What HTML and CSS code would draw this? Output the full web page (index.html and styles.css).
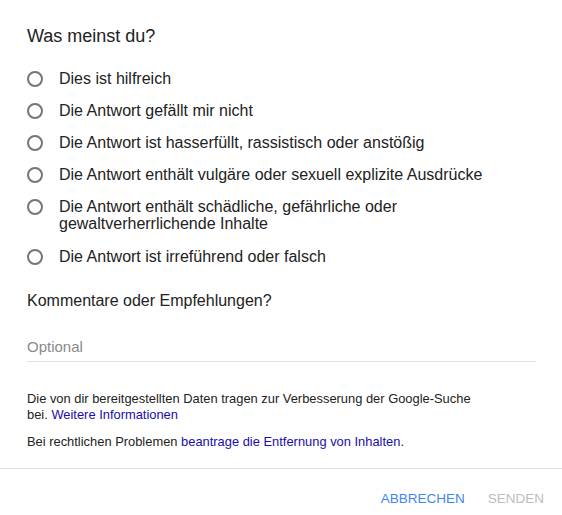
FILE: index.html
```html
<html>
<head>
<meta charset="utf-8">
<link rel="stylesheet" href="styles.css">
</head>
<body>

<div class="dialog">
  <div class="content">
    <div class="title">Was meinst du?</div>

    <div class="options">
      <label class="option"><span class="radio"></span><span class="label">Dies ist hilfreich</span></label>
      <label class="option"><span class="radio"></span><span class="label">Die Antwort gefällt mir nicht</span></label>
      <label class="option"><span class="radio"></span><span class="label">Die Antwort ist hasserfüllt, rassistisch oder anstößig</span></label>
      <label class="option"><span class="radio"></span><span class="label">Die Antwort enthält vulgäre oder sexuell explizite Ausdrücke</span></label>
      <label class="option"><span class="radio"></span><span class="label">Die Antwort enthält schädliche, gefährliche oder<br>gewaltverherrlichende Inhalte</span></label>
      <label class="option"><span class="radio"></span><span class="label">Die Antwort ist irreführend oder falsch</span></label>
    </div>

    <div class="subtitle">Kommentare oder Empfehlungen?</div>
    <div class="field">Optional</div>

    <p class="note">Die von dir bereitgestellten Daten tragen zur Verbesserung der Google-Suche bei. <a href="#">Weitere Informationen</a></p>
    <p class="note">Bei rechtlichen Problemen <a href="#">beantrage die Entfernung von Inhalten</a>.</p>
  </div>

  <div class="actions">
    <span class="btn cancel">Abbrechen</span>
    <span class="btn send">Senden</span>
  </div>
</div>

</body>
</html>
```

FILE: styles.css
```css
body {
  margin: 0;
  background: #fff;
  font-family: "Liberation Sans", Arial, sans-serif;
  color: #222;
}

.content {
  padding: 26px 26px 0 27px;
}

.title {
  font-size: 18px;
  line-height: 20px;
  margin-bottom: 24px;
}

.options {
  display: flex;
  flex-direction: column;
  gap: 15px;
}

.option {
  display: flex;
  align-items: flex-start;
  font-size: 16px;
  line-height: 17px;
}

.option:last-child {
  margin-top: 1px;
}

.radio {
  width: 12px;
  height: 12px;
  border: 2px solid #757575;
  border-radius: 50%;
  margin: 1px 16px 0 0;
  flex-shrink: 0;
}

.subtitle {
  font-size: 16px;
  line-height: 20px;
  margin-top: 26px;
}

.field {
  font-size: 15px;
  line-height: 20px;
  color: #8a8a8a;
  padding: 26px 0 4px;
  border-bottom: 1px solid #e0e0e0;
}

.note {
  font-size: 12.9px;
  line-height: 16px;
  margin: 0;
  max-width: 455px;
}

.field + .note {
  margin-top: 29px;
}

.note + .note {
  margin-top: 11px;
}

.note a {
  color: #1a0dab;
  text-decoration: none;
}

.actions {
  margin-top: 18px;
  border-top: 1px solid #e0e0e0;
  display: flex;
  justify-content: flex-end;
  gap: 23px;
  padding: 22px 18px 0 0;
}

.btn {
  font-size: 13.5px;
  line-height: 16px;
  text-transform: uppercase;
}

.cancel {
  color: #4285f4;
}

.send {
  color: #bdbdbd;
}
```
